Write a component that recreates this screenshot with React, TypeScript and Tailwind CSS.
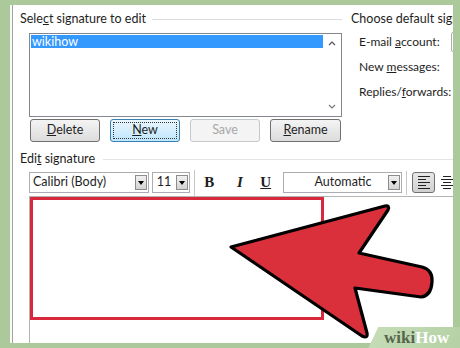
import React from "react";

const font = { fontFamily: "Lato, 'Liberation Sans', sans-serif" };

function Btn({ children, kind = "normal", w = "w-[70px]" }: { children: React.ReactNode; kind?: "normal" | "focus" | "disabled"; w?: string }) {
  const cls =
    kind === "focus"
      ? "border-[#3c7fb1] bg-gradient-to-b from-[#eaf6fd] to-[#bee6fd] text-[#1e1e1e]"
      : kind === "disabled"
      ? "border-[#c5c8ca] bg-[#f4f4f4] text-[#a8a8a8]"
      : "border-[#707070] bg-gradient-to-b from-[#f4f4f4] to-[#dcdcdc] text-[#1e1e1e]";
  return (
    <div className={`${w} h-[23px] rounded-[3px] border ${cls} flex items-center justify-center p-[2px]`}>
      <div className={`w-full h-full flex items-center justify-center text-[12.5px] ${kind === "focus" ? "border border-dotted border-[#333]" : ""}`}>
        {children}
      </div>
    </div>
  );
}

function DropBtn() {
  return (
    <div className="w-[12px] h-[15px] border border-[#8c8c8c] bg-gradient-to-b from-[#f0f0f0] to-[#d4d4d4] flex items-center justify-center">
      <div className="w-0 h-0 border-l-[3.5px] border-r-[3.5px] border-t-[4px] border-l-transparent border-r-transparent border-t-black" />
    </div>
  );
}

function Lines({ align }: { align: "left" | "center" }) {
  const widths = align === "left" ? [12, 8, 12, 8, 12] : [8, 12, 8, 12, 8];
  return (
    <div className={`flex flex-col gap-[1.5px] ${align === "left" ? "items-start" : "items-center"}`}>
      {widths.map((w, i) => (
        <div key={i} className="h-[1.5px] bg-[#222]" style={{ width: w }} />
      ))}
    </div>
  );
}

export default function App() {
  return (
    <div className="relative w-[460px] h-[348px] overflow-hidden bg-[#abc99b] pl-[10px] pt-[5px]" style={font}>
      {/* dialog */}
      <div className="w-[443px] h-[338px] bg-[#f9faf8] pl-[2px] overflow-hidden">
        <div className="h-full bg-white border-l border-[#a3a3a3] flex flex-col text-[#1e1e1e] text-[12.5px]">
          {/* top section */}
          <div className="flex">
            <div className="w-[329px] shrink-0">
              <div className="h-[14px] mt-[7px] pl-[7px] flex items-center">
                <span className="whitespace-nowrap leading-none">
                  Sele<span className="underline">c</span>t signature to edit
                </span>
                <div className="flex-1 h-px bg-[#dcdcdc] ml-[6px]" />
              </div>
              <div className="ml-[16px] mt-[7px] w-[313px] h-[84px] border border-[#828790] flex">
                <div className="flex-1 pt-px pl-px">
                  <div className="h-[13px] bg-[#3399ff] text-white leading-[13px] pl-[1px]">wikihow</div>
                </div>
                <div className="w-[18px] flex flex-col items-center justify-between py-[7px]">
                  <svg width="8" height="5" viewBox="0 0 8 5"><path d="M1 4 4 1 7 4" fill="none" stroke="#555" strokeWidth="1.2" /></svg>
                  <svg width="8" height="5" viewBox="0 0 8 5"><path d="M1 1 4 4 7 1" fill="none" stroke="#777" strokeWidth="1.2" /></svg>
                </div>
              </div>
              <div className="ml-[17px] mt-[2px] flex gap-[10px]">
                <Btn><span><span className="underline">D</span>elete</span></Btn>
                <Btn kind="focus"><span><span className="underline">N</span>ew</span></Btn>
                <Btn kind="disabled">Save</Btn>
                <Btn w="w-[71px]"><span><span className="underline">R</span>ename</span></Btn>
              </div>
            </div>
            <div className="flex-1 pl-[9px] overflow-hidden">
              <div className="h-[14px] mt-[7px] flex items-center whitespace-nowrap leading-none">Choose default signature</div>
              <div className="mt-[6px] pl-[8px] flex flex-col text-[12px]">
                <div className="h-[20px] flex items-center whitespace-nowrap">
                  <span className="w-[92px] shrink-0">E-mail <span className="underline">a</span>ccount:</span>
                  <div className="w-[30px] h-[20px] border border-[#abadb3] rounded-[2px] shrink-0" />
                </div>
                <div className="h-[25px] mt-[2px] flex items-center whitespace-nowrap">
                  <span>New <span className="underline">m</span>essages:</span>
                </div>
                <div className="h-[25px] flex items-center whitespace-nowrap">
                  <span>Replies/<span className="underline">f</span>orwards:</span>
                </div>
              </div>
            </div>
          </div>

          {/* edit signature header */}
          <div className="h-[14px] mt-[10px] pl-[7px] flex items-center">
            <span className="whitespace-nowrap leading-none">
              Edi<span className="underline">t</span> signature
            </span>
            <div className="flex-1 h-px bg-[#e3e3e3] ml-[8px]" />
          </div>

          {/* toolbar */}
          <div className="mt-[6px] h-[21px] pl-[16px] flex items-center whitespace-nowrap">
            <div className="w-[122px] h-[21px] border border-[#abadb3] flex items-center justify-between pl-[3px] pr-[1px]">
              <span>Calibri (Body)</span>
              <DropBtn />
            </div>
            <div className="ml-[3px] w-[39px] h-[21px] border border-[#abadb3] flex items-center justify-between pl-[4px] pr-[1px]">
              <span>11</span>
              <DropBtn />
            </div>
            <div className="ml-[4px] w-px h-[27px] bg-[#c8c8c8] self-start -mt-[2px]" />
            <div className="ml-[8px] w-[12px] text-center font-bold text-[15px] leading-none" style={{ fontFamily: "'Liberation Serif', serif" }}>B</div>
            <div className="ml-[19px] w-[12px] text-center font-bold italic text-[15px] leading-none" style={{ fontFamily: "'Liberation Serif', serif" }}>I</div>
            <div className="ml-[14px] w-[12px] text-center font-bold underline text-[15px] leading-none" style={{ fontFamily: "'Liberation Serif', serif" }}>U</div>
            <div className="ml-[11px] w-[122px] h-[21px] border border-[#abadb3] flex items-center pr-[1px]">
              <span className="flex-1 text-center pl-[14px]">Automatic</span>
              <DropBtn />
            </div>
            <div className="ml-[4px] w-px h-[24px] bg-[#c8c8c8]" />
            <div className="ml-[5px] w-[23px] h-[21px] rounded-[3px] border border-[#707070] bg-gradient-to-b from-[#e8e8e8] to-[#d0d0d0] flex items-center justify-center">
              <Lines align="left" />
            </div>
            <div className="ml-[6px]">
              <Lines align="center" />
            </div>
          </div>

          {/* editor */}
          <div className="mt-[3px] ml-[16px] flex-1 border-t border-l border-[#b4b4b4]">
            <div className="w-[294px] h-[123px] border-[3px] border-[#d8283c]" />
          </div>
        </div>
      </div>

      {/* pointing arrow */}
      <svg className="absolute left-0 top-0" width="460" height="348" viewBox="0 0 460 348">
        <path
          d="M231 247 L385 206 Q390 205 388 210 L359 253 L422 267 Q433 270 432 282 Q431 296 421 297 L355 288 L367 333 Q368 339 362 336 Z"
          fill="#d9303c"
          stroke="#000"
          strokeWidth="3.2"
          strokeLinejoin="round"
        />
      </svg>

      {/* watermark */}
      <div className="absolute left-[368px] top-[327px] w-[100px] h-[22px] bg-gradient-to-r from-[#c5dcb7] to-[#b3d0a2] -skew-x-[25deg] origin-bottom-left" />
      <div
        className="absolute left-[384px] top-[328px] text-[17px] font-bold leading-[20px]"
        style={{ fontFamily: "'Liberation Serif', serif" }}
      >
        <span className="text-[#56664d]">wiki</span>
        <span className="text-white">How</span>
      </div>
    </div>
  );
}
